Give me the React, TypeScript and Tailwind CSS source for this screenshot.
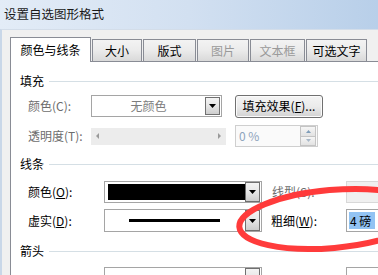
import React from "react";

function Tri() {
  return (
    <svg width="7" height="4" viewBox="0 0 7 4">
      <path d="M0 0H7L3.5 4Z" fill="#000" />
    </svg>
  );
}

function DropBtn({ h = "h-[18px]" }: { h?: string }) {
  return (
    <div
      className={`w-[15px] ${h} shrink-0 border border-[#707070] bg-gradient-to-b from-[#f4f4f4] via-[#e6e6e6] to-[#cdcdcd] flex items-center justify-center`}
    >
      <Tri />
    </div>
  );
}

function Heading({ text }: { text: string }) {
  return (
    <div className="flex items-center h-[16px] pl-[9px]">
      <span className="leading-none">{text}</span>
      <div className="flex-1 h-px bg-[#d5dfe5] ml-[5px]" />
    </div>
  );
}

function Tab({ label, w, disabled }: { label: string; w: string; disabled?: boolean }) {
  return (
    <div
      className={`${w} shrink-0 h-[22px] ml-[1px] border border-b-0 border-[#898c95] bg-gradient-to-b from-[#f3f3f3] via-[#ebebeb] to-[#d9d9d9] flex items-center justify-center ${
        disabled ? "text-[#9a9a9a]" : "text-black"
      }`}
    >
      {label}
    </div>
  );
}

export default function App() {
  return (
    <div className="relative w-[378px] h-[275px] overflow-hidden bg-[#f0f0f0] font-['Microsoft_YaHei','Noto_Sans_CJK_SC',sans-serif] text-[12px] text-black flex flex-col">
      <div className="h-[29px] shrink-0 bg-gradient-to-r from-[#e3ecf7] via-[#d2e0f1] to-[#b8cfe9] flex items-center pl-[4px] text-[12.5px] text-[#1a1a1a]">
        设置自选图形格式
      </div>
      <div className="flex-1 flex flex-col border-t border-[#d3dde9] border-l-[2px] border-l-[#c9d7e8] pl-[8px] pt-[7px]">
        <div className="flex items-end h-[24px] shrink-0">
          <div className="relative z-10 -mb-px w-[81px] shrink-0 h-[25px] bg-white border border-b-0 border-[#898c95] flex items-center justify-center">
            颜色与线条
          </div>
          <Tab label="大小" w="w-[50px]" />
          <Tab label="版式" w="w-[53px]" />
          <Tab label="图片" w="w-[52px]" disabled />
          <Tab label="文本框" w="w-[55px]" disabled />
          <Tab label="可选文字" w="w-[61px]" />
        </div>
        <div className="flex-1 bg-white border-l border-t border-[#898c95] pt-[11px]">
          <Heading text="填充" />
          {/* row 1 */}
          <div className="flex items-center h-[22px] mt-[6px]">
            <div className="w-[80px] shrink-0 pl-[17px] text-[#6d6d6d]">颜色(C):</div>
            <div className="w-[131px] shrink-0 h-[22px] border border-[#a5a5a5] bg-white flex items-center pr-[1px]">
              <div className="flex-1 text-center text-[#7d7d7d]">无颜色</div>
              <DropBtn />
            </div>
            <div className="ml-[13px] w-[88px] shrink-0 h-[23px] rounded-[3px] border border-[#707070] bg-gradient-to-b from-[#f4f4f4] via-[#ebebeb] to-[#d2d2d2] flex items-center justify-center shadow-[inset_0_0_0_1px_#fbfbfb]">
              填充效果(<span className="underline">F</span>)...
            </div>
          </div>
          {/* row 2 */}
          <div className="flex items-center h-[22px] mt-[8px]">
            <div className="w-[80px] shrink-0 pl-[17px] text-[#6d6d6d]">透明度(T):</div>
            <div className="w-[135px] shrink-0 h-[17px] bg-[#ececec] flex items-center justify-between px-[5px]">
              <svg width="3" height="6" viewBox="0 0 3 6">
                <path d="M3 0V6L0 3Z" fill="#9a9a9a" />
              </svg>
              <svg width="3" height="6" viewBox="0 0 3 6">
                <path d="M0 0V6L3 3Z" fill="#9a9a9a" />
              </svg>
            </div>
            <div className="ml-[9px] w-[83px] shrink-0 h-[22px] border border-[#cfcfcf] bg-[#fafafa] flex items-center">
              <div className="flex-1 pl-[3px] text-[#8ea4bc]">0 %</div>
              <div className="w-[16px] h-[20px] flex flex-col mr-[1px]">
                <div className="flex-1 border border-[#c4c4c4] bg-gradient-to-b from-[#f6f6f6] to-[#e2e2e2] flex items-center justify-center">
                  <svg width="5" height="3" viewBox="0 0 5 3">
                    <path d="M0 3H5L2.5 0Z" fill="#7f9db9" />
                  </svg>
                </div>
                <div className="flex-1 border border-t-0 border-[#c4c4c4] bg-gradient-to-b from-[#f6f6f6] to-[#e2e2e2] flex items-center justify-center">
                  <svg width="5" height="3" viewBox="0 0 5 3">
                    <path d="M0 0H5L2.5 3Z" fill="#a8b8c8" />
                  </svg>
                </div>
              </div>
            </div>
          </div>
          <div className="mt-[9px]">
            <Heading text="线条" />
          </div>
          {/* row 3 */}
          <div className="flex items-center h-[22px] mt-[9px]">
            <div className="w-[93px] shrink-0 pl-[17px]">
              颜色(<span className="underline">O</span>):
            </div>
            <div className="w-[158px] shrink-0 h-[22px] border border-[#a5a5a5] bg-white flex items-center pl-[3px] pr-[1px]">
              <div className="flex-1 h-[16px] bg-black" />
              <DropBtn h="h-[20px]" />
            </div>
            <div className="w-[84px] shrink-0 pl-[10px] text-[#6d6d6d]">线型(S):</div>
            <div className="w-[40px] shrink-0 h-[22px] bg-[#f0f0f0] border border-[#d8d8d8]" />
          </div>
          {/* row 4 */}
          <div className="flex items-center h-[23px] mt-[6px]">
            <div className="w-[93px] shrink-0 pl-[17px]">
              虚实(<span className="underline">D</span>):
            </div>
            <div className="w-[158px] shrink-0 h-[23px] border border-[#a5a5a5] bg-white flex items-center pr-[1px]">
              <div className="flex-1 pl-[24px] flex items-center">
                <div className="w-[91px] h-[3px] bg-black" />
              </div>
              <DropBtn h="h-[21px]" />
            </div>
            <div className="w-[84px] shrink-0 pl-[9px]">
              粗细(<span className="underline">W</span>):
            </div>
            <div className="w-[40px] shrink-0 h-[23px] border border-[#a5a5a5] bg-white flex items-center pl-[2px]">
              <span className="bg-[#92c3f3] pl-[1px] pr-[4px] leading-[17px] whitespace-nowrap">4 磅</span>
            </div>
          </div>
          <div className="mt-[11px]">
            <Heading text="箭头" />
          </div>
          {/* row 5 */}
          <div className="flex items-center h-[22px] mt-[8px]">
            <div className="w-[93px] shrink-0 pl-[17px] text-[#6d6d6d] pt-[6px] whitespace-nowrap">始端样式(B):</div>
            <div className="w-[158px] shrink-0 h-[22px] border border-[#a5a5a5] bg-white flex items-center justify-end pr-[1px]">
              <DropBtn h="h-[20px]" />
            </div>
            <div className="w-[84px] shrink-0 pl-[13px] text-[#6d6d6d] pt-[6px] whitespace-nowrap">末端样式(E):</div>
            <div className="w-[40px] shrink-0 h-[22px] bg-white border border-[#a5a5a5]" />
          </div>
        </div>
      </div>
      <svg
        className="absolute left-0 top-0 pointer-events-none"
        width="378"
        height="275"
        viewBox="0 0 378 275"
      >
        <ellipse
          cx="332"
          cy="219"
          rx="93"
          ry="29"
          transform="rotate(-5 332 219)"
          fill="none"
          stroke="#ff3b3b"
          strokeWidth="6"
        />
      </svg>
    </div>
  );
}
